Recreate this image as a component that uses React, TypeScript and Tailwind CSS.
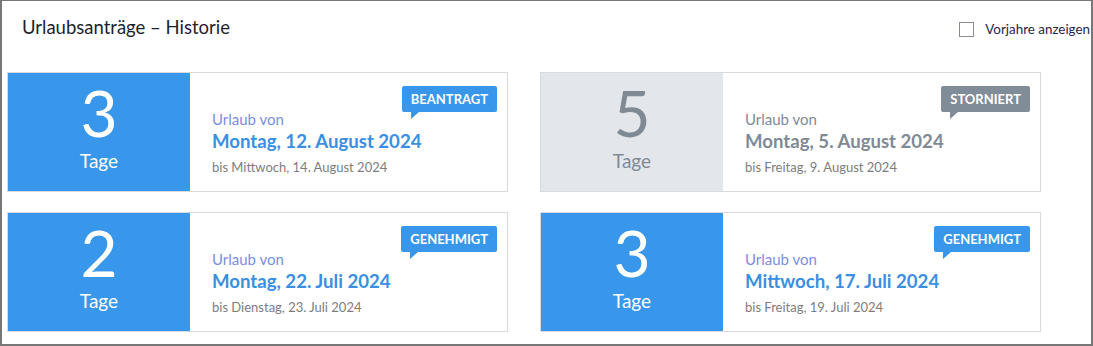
import React from "react";

type Item = {
  days: number;
  status: string;
  from: string;
  to: string;
  cancelled?: boolean;
};

const items: Item[] = [
  { days: 3, status: "BEANTRAGT", from: "Montag, 12. August 2024", to: "bis Mittwoch, 14. August 2024" },
  { days: 5, status: "STORNIERT", from: "Montag, 5. August 2024", to: "bis Freitag, 9. August 2024", cancelled: true },
  { days: 2, status: "GENEHMIGT", from: "Montag, 22. Juli 2024", to: "bis Dienstag, 23. Juli 2024" },
  { days: 3, status: "GENEHMIGT", from: "Mittwoch, 17. Juli 2024", to: "bis Freitag, 19. Juli 2024" },
];

function Card({ item }: { item: Item }) {
  const c = item.cancelled;
  return (
    <div className="flex h-[120px] w-[501px] border border-[#d7dbe0] bg-white">
      <div
        className={
          c
            ? "flex w-[182px] flex-col items-center bg-[#e3e6ea] text-[#7f8a95]"
            : "flex w-[182px] flex-col items-center bg-[#3897ea] text-white"
        }
      >
        <div className="mt-[8px] text-[64px] font-normal leading-[64px]">{item.days}</div>
        <div className="mt-[6px] text-[19px] leading-[20px]">Tage</div>
      </div>
      <div className="relative flex-1 pl-[22px] pt-[37px]">
        <div className={c ? "text-[15px] leading-[18px] text-[#7f8a95]" : "text-[15px] leading-[18px] text-[#7a8ee0]"}>
          Urlaub von
        </div>
        <div className={c ? "mt-[2px] text-[18.6px] font-bold leading-[22px] text-[#7f8a95]" : "mt-[2px] text-[18.6px] font-bold leading-[22px] text-[#3a8fe2]"}>
          {item.from}
        </div>
        <div className="mt-[7px] text-[13px] leading-[16px] text-[#7d7d7d]">{item.to}</div>
        <div
          className={
            c
              ? "absolute right-[10px] top-[13px] rounded-[2px] bg-[#808c97] px-[9px] py-[4px] text-[13px] font-bold leading-[18px] text-white"
              : "absolute right-[10px] top-[13px] rounded-[2px] bg-[#3897ea] px-[9px] py-[4px] text-[13px] font-bold leading-[18px] text-white"
          }
        >
          {item.status}
          <span
            className={
              c
                ? "absolute left-[9px] top-full h-0 w-0 border-r-[8px] border-t-[7px] border-r-transparent border-t-[#808c97]"
                : "absolute left-[9px] top-full h-0 w-0 border-r-[8px] border-t-[7px] border-r-transparent border-t-[#3897ea]"
            }
          />
        </div>
      </div>
    </div>
  );
}

export default function App() {
  return (
    <div
      className="h-[346px] w-[1093px] overflow-hidden border-b-2 border-l-2 border-r-2 border-t border-[#777777] bg-white"
      style={{ fontFamily: "Lato, 'Noto Sans', sans-serif" }}
    >
      <div className="flex h-[71px] items-start">
        <div className="ml-[20px] mt-[15px] text-[18.5px] leading-[22px] text-[#1d1f2e]">Urlaubsanträge – Historie</div>
        <div className="ml-auto mr-[1px] mt-[20px] flex items-center">
          <span className="h-[15px] w-[15px] border border-[#888d94] bg-white" />
          <span className="ml-[11px] text-[13.4px] leading-[16px] text-[#26284a]">Vorjahre anzeigen</span>
        </div>
      </div>
      <div className="ml-[5px] grid w-[1035px] grid-cols-[501px_501px] gap-x-[32px] gap-y-[20px]">
        {items.map((it, i) => (
          <Card key={i} item={it} />
        ))}
      </div>
    </div>
  );
}
